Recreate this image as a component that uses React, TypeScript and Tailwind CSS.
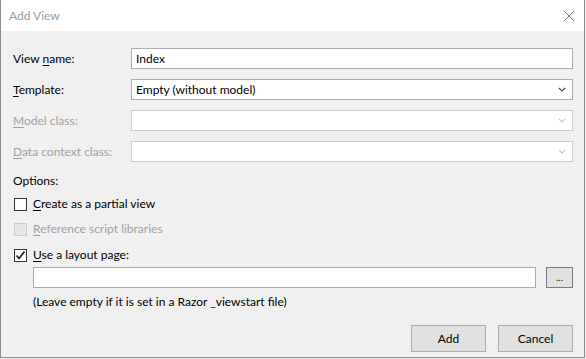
import React from 'react';

const font = { fontFamily: 'Lato, "Segoe UI", sans-serif' };

const Chevron = ({ disabled }: { disabled?: boolean }) => (
  <svg width="8" height="5" viewBox="0 0 8 5" className="shrink-0">
    <polyline points="0.8,0.8 4,4 7.2,0.8" fill="none" stroke={disabled ? '#c4c4c4' : '#444'} strokeWidth="1.1" />
  </svg>
);

const U = ({ children }: { children: React.ReactNode }) => <span className="underline underline-offset-2">{children}</span>;

const FieldRow = ({ label, disabled, select, value }: { label: React.ReactNode; disabled?: boolean; select?: boolean; value?: string }) => (
  <div className="flex items-center h-[21px]">
    <div className={`w-[118px] shrink-0 ${disabled ? 'text-[#a2a2a2]' : 'text-black'}`}>{label}</div>
    <div className={`flex-1 h-full flex items-center bg-white border pl-[4px] pr-[6px] ${disabled ? 'border-[#cccccc]' : 'border-[#acacac]'}`}>
      <span className="flex-1 text-black">{value}</span>
      {select && <Chevron disabled={disabled} />}
    </div>
  </div>
);

const Check = ({ checked, disabled, label, className }: { checked?: boolean; disabled?: boolean; label: React.ReactNode; className?: string }) => (
  <div className={`flex items-center h-[16px] ${className ?? ''}`}>
    <div className={`w-[13px] h-[13px] border flex items-center justify-center ${disabled ? 'border-[#cccccc] bg-[#e6e6e6]' : 'border-[#333333] bg-white'}`}>
      {checked && (
        <svg width="11" height="11" viewBox="0 0 11 11">
          <polyline points="1.5,5.5 4,8.5 9.5,1.5" fill="none" stroke="#222" strokeWidth="1.7" />
        </svg>
      )}
    </div>
    <span className={`ml-[6px] ${disabled ? 'text-[#a2a2a2]' : 'text-black'}`}>{label}</span>
  </div>
);

export default function App() {
  return (
    <div className="w-[586px] h-[359px] bg-[#f0f0f0] text-[12px] leading-[16px]" style={font}>
      <div className="w-[585px] h-[358px] border-l border-r border-b border-[#8a8a8a] flex flex-col bg-[#f0f0f0]">
        <div className="h-[31px] bg-white flex items-center justify-between pl-[8px] pr-[8px]">
          <span className="text-[#9a9a9a]">Add View</span>
          <svg width="12" height="12" viewBox="0 0 12 12" className="mr-[1px]">
            <path d="M1 1 L11 11 M11 1 L1 11" stroke="#7a7a7a" strokeWidth="1" />
          </svg>
        </div>
        <div className="flex flex-col pl-[12px] pr-[11px] pt-[17px]">
          <FieldRow label={<>View <U>n</U>ame:</>} value="Index" />
          <div className="mt-[10px]">
            <FieldRow label={<><U>T</U>emplate:</>} value="Empty (without model)" select />
          </div>
          <div className="mt-[10px]">
            <FieldRow label={<><U>M</U>odel class:</>} disabled select />
          </div>
          <div className="mt-[10px]">
            <FieldRow label={<><U>D</U>ata context class:</>} disabled select />
          </div>
          <div className="mt-[11px] h-[16px]">Options:</div>
          <Check className="mt-[7px] ml-[1px]" label={<><U>C</U>reate as a partial view</>} />
          <Check className="mt-[9px] ml-[1px]" disabled label={<><U>R</U>eference script libraries</>} />
          <Check className="mt-[10px] ml-[1px]" checked label={<><U>U</U>se a layout page:</>} />
          <div className="flex items-center mt-[4px] ml-[20px] h-[21px]">
            <div className="flex-1 h-full bg-white border border-[#acacac]" />
            <div className="ml-[10px] w-[27px] h-full bg-[#e1e1e1] border border-[#7a7a7a] flex items-center justify-center text-[10px] leading-none pb-[2px]">...</div>
          </div>
          <div className="mt-[6px] ml-[20px] h-[16px]">(Leave empty if it is set in a Razor _viewstart file)</div>
          <div className="flex justify-end gap-[12px] mt-[15px]">
            <div className="w-[75px] h-[27px] bg-[#e1e1e1] border border-[#adadad] flex items-center justify-center">Add</div>
            <div className="w-[75px] h-[27px] bg-[#e1e1e1] border border-[#adadad] flex items-center justify-center">Cancel</div>
          </div>
        </div>
      </div>
    </div>
  );
}
